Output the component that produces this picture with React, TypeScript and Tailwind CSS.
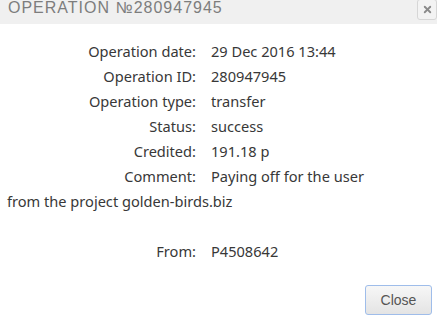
import { X } from 'lucide-react';

const rows = [
  { label: 'Operation date:', value: '29 Dec 2016 13:44' },
  { label: 'Operation ID:', value: '280947945' },
  { label: 'Operation type:', value: 'transfer' },
  { label: 'Status:', value: 'success' },
  { label: 'Credited:', value: '191.18 р' },
];

export default function App() {
  return (
    <div className="w-[437px] h-[321px] bg-white flex flex-col overflow-hidden" style={{ fontFamily: '"Noto Sans", sans-serif' }}>
      <div className="h-[24px] bg-[#f0f0f0] flex items-start justify-between pl-[8px]">
        <h1
          className="text-[16px] leading-[16px] tracking-[1px] text-[#7d7d7d] uppercase pt-[0px]"
          style={{ fontFamily: '"Liberation Sans", sans-serif' }}
        >
          Operation №280947945
        </h1>
        <button className="w-[20px] h-[21px] -mt-[1px] border border-[#d6d6d6] rounded-[3px] bg-[#f3f3f3] flex items-center justify-center">
          <X size={11} strokeWidth={4} className="text-[#8a8a8a]" />
        </button>
      </div>

      <div className="px-[7px] pt-[15px] text-[14.6px] leading-[25px] text-[#383838]">
        {rows.map((r) => (
          <div key={r.label}>
            <span className="inline-block w-[189px] text-right">{r.label}</span>
            <span className="ml-[15px]">{r.value}</span>
          </div>
        ))}
        <div>
          <span className="inline-block w-[189px] text-right">Comment:</span>
          <span className="ml-[15px]">Paying off for the user</span>
          <br />
          from the project golden-birds.biz
        </div>
        <div className="h-[25px]" />
        <div>
          <span className="inline-block w-[189px] text-right">From:</span>
          <span className="ml-[15px]">P4508642</span>
        </div>
      </div>

      <div className="mt-auto flex justify-end pr-[5px] pb-[6px]">
        <button
          className="w-[67px] h-[30px] border border-[#9fbdea] rounded-[3px] bg-gradient-to-b from-[#f7f7f7] to-[#e4e4e4] text-[14px] text-[#555]"
          style={{ fontFamily: '"Liberation Sans", sans-serif' }}
        >
          Close
        </button>
      </div>
    </div>
  );
}
